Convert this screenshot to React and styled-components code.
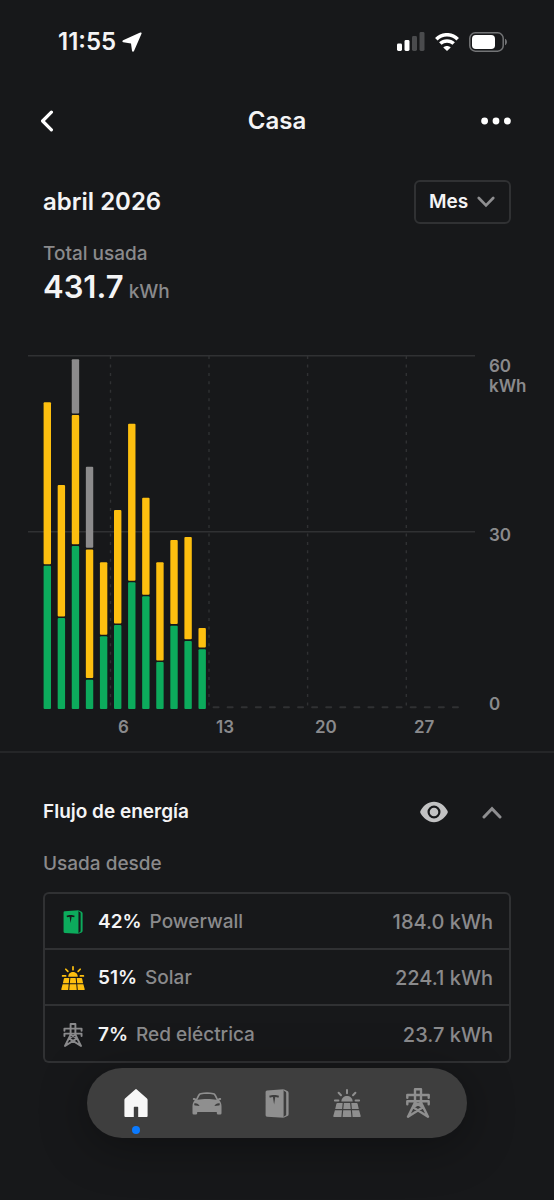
import { useState } from "react"
import styled, { createGlobalStyle } from "styled-components"

const days = [
  { powerwall: 24.4, solar: 27.9 },
  { powerwall: 15.5, solar: 22.7 },
  { powerwall: 27.8, solar: 22.3, grid: 9.5 },
  { powerwall: 5, solar: 22.2, grid: 14.1 },
  { powerwall: 12.4, solar: 12.6 },
  { powerwall: 14.3, solar: 19.6 },
  { powerwall: 21.6, solar: 27 },
  { powerwall: 19.2, solar: 16.8 },
  { powerwall: 8, solar: 17 },
  { powerwall: 14.2, solar: 14.6 },
  { powerwall: 11.6, solar: 17.7 },
  { powerwall: 10.2, solar: 3.6 },
]

const sources = [
  { name: "Powerwall", percent: "42%", total: "184.0 kWh", color: "#0cab5c", Icon: PowerwallIcon },
  { name: "Solar", percent: "51%", total: "224.1 kWh", color: "#fdbf0f", Icon: SolarIcon },
  { name: "Red eléctrica", percent: "7%", total: "23.7 kWh", color: "#8a8a8c", Icon: GridIcon },
]

const tabs = [
  { name: "Casa", Icon: HouseIcon },
  { name: "Vehículo", Icon: CarIcon },
  { name: "Powerwall", Icon: PowerwallIcon },
  { name: "Solar", Icon: SolarIcon },
  { name: "Red eléctrica", Icon: GridIcon },
]

export default function App() {
  const [open, setOpen] = useState(true)
  const [tab, setTab] = useState("Casa")

  return (
    <>
      <GlobalStyle />
      <StatusBar>
        <Clock>
          <span>11:55</span>
          <LocationIcon />
        </Clock>
        <StatusIcons>
          <SignalIcon />
          <WifiIcon />
          <BatteryIcon />
        </StatusIcons>
      </StatusBar>

      <Header>
        <IconButton aria-label="Atrás">
          <svg width="14" height="22" viewBox="0 0 14 22" fill="none" stroke="#fff" strokeWidth="3.2" strokeLinecap="round" strokeLinejoin="round">
            <path d="M11.4 2.2 2.6 11l8.8 8.8" />
          </svg>
        </IconButton>
        <h1>Casa</h1>
        <IconButton aria-label="Más opciones">
          <svg width="33" height="8" viewBox="0 0 33 8" fill="#fff">
            <circle cx="3.6" cy="4" r="3.4" />
            <circle cx="15" cy="4" r="3.4" />
            <circle cx="26.4" cy="4" r="3.4" />
          </svg>
        </IconButton>
      </Header>

      <main>
        <PeriodRow>
          <h2>abril 2026</h2>
          <PeriodPicker>
            <select aria-label="Periodo" defaultValue="Mes">
              <option>Día</option>
              <option>Mes</option>
              <option>Año</option>
            </select>
            <Chevron width={18} />
          </PeriodPicker>
        </PeriodRow>

        <Total>
          <Muted>Total usada</Muted>
          <p>
            <strong>431.7</strong> <Muted>kWh</Muted>
          </p>
        </Total>

        <ChartRow>
          <Chart />
          <Axis>
            <span>60 kWh</span>
            <span>30</span>
            <span>0</span>
          </Axis>
        </ChartRow>

        <Flow>
          <FlowHeader>
            <h3>Flujo de energía</h3>
            <IconButton aria-label="Mostrar en el gráfico">
              <EyeIcon />
            </IconButton>
            <IconButton aria-label="Contraer" aria-expanded={open} onClick={() => setOpen(!open)}>
              <Chevron width={20} up={open} />
            </IconButton>
          </FlowHeader>
          {open && (
            <Sources>
              <caption>Usada desde</caption>
              <tbody>
                {sources.map(({ name, percent, total, color, Icon }) => (
                  <tr key={name}>
                    <SourceName scope="row">
                      <div>
                        <SourceIcon color={color}>
                          <Icon />
                        </SourceIcon>
                        <strong>{percent}</strong>
                        <span>{name}</span>
                      </div>
                    </SourceName>
                    <SourceTotal>{total}</SourceTotal>
                  </tr>
                ))}
              </tbody>
            </Sources>
          )}
        </Flow>
      </main>

      <TabBar>
        {tabs.map(({ name, Icon }) => (
          <Tab key={name} aria-label={name} $active={tab === name} onClick={() => setTab(name)}>
            <Icon />
          </Tab>
        ))}
      </TabBar>
    </>
  )
}

const STEP = 14.08
const UNIT = 5.867
const BASE = 354

function Chart() {
  return (
    <svg viewBox="0 0 447 384" role="img" aria-label="Energía usada por día">
      <g stroke="#303133" strokeWidth="1.4">
        <path d="M0 .8H447M0 176.8H447" />
        {[82.5, 181, 279.6, 378.3].map((x) => (
          <path key={x} d={`M${x} 1V352`} strokeDasharray="3 5.45" />
        ))}
      </g>
      {Array.from({ length: 30 }, (_, i) => {
        const x = 15.6 + i * STEP
        if (!days[i]) return <rect key={i} x={x} y="351.2" width="7" height="2" rx="1" fill="#303133" />
        const { powerwall, solar, grid = 0 } = days[i]
        return (
          <g key={i}>
            <Segment x={x} from={0} value={powerwall} fill="#0cab5c" />
            <Segment x={x} from={powerwall} value={solar} fill="#fdbf0f" />
            {grid > 0 && <Segment x={x} from={powerwall + solar} value={grid} fill="#8c8b8c" />}
          </g>
        )
      })}
      <DayLabels>
        <text x="90" y="378">6</text>
        <text x="188" y="378">13</text>
        <text x="287" y="378">20</text>
        <text x="386" y="378">27</text>
      </DayLabels>
    </svg>
  )
}

function Segment({ x, from, value, fill }) {
  const gap = from ? 1.6 : 0
  const height = value * UNIT
  return <rect x={x} y={BASE - from * UNIT - height} width="7.4" height={height - gap} rx="1" fill={fill} />
}

function Chevron({ width, up }) {
  return (
    <svg width={width} height={width * 0.65} viewBox="0 0 20 13" fill="none" stroke="#8e8e90" strokeWidth="3" strokeLinecap="round">
      <path d={up ? "M2 11 10 2.6 18 11" : "M2 2.2 10 10.4 18 2.2"} />
    </svg>
  )
}

function LocationIcon() {
  return (
    <svg width="20" height="20" viewBox="0 0 20 20" fill="#fff">
      <path d="M18.2.5C19.2.1 19.9.8 19.5 1.8L12 19C11.6 20 10.2 19.9 10 18.8L9 11.4 1.3 10.2C.2 10 .1 8.6 1.1 8.2Z" />
    </svg>
  )
}

function SignalIcon() {
  return (
    <svg width="28" height="19" viewBox="0 0 28 19" fill="#fff">
      <rect x="0" y="11.5" width="5" height="7.5" rx="1.4" />
      <rect x="7.5" y="8" width="5" height="11" rx="1.4" />
      <rect x="15" y="4" width="5" height="15" rx="1.4" fill="#4a4b4d" />
      <rect x="22.5" y="0" width="5" height="19" rx="1.4" fill="#4a4b4d" />
    </svg>
  )
}

function WifiIcon() {
  return (
    <svg width="24" height="18" viewBox="0 0 24 18" fill="none" stroke="#fff" strokeWidth="3.5">
      <path d="M1.3 6.2C7.2.2 16.8.2 22.7 6.2" />
      <path d="M5.3 10.6C9 7 15 7 18.7 10.6" />
      <path d="M12 18 8.3 14.4C10.200 12.400 13.800 12.400 15.700 14.400Z" fill="#fff" stroke="none" />
    </svg>
  )
}

function BatteryIcon() {
  return (
    <svg width="39" height="20" viewBox="0 0 39 20">
      <rect x=".8" y=".8" width="33.4" height="18.4" rx="5.5" fill="none" stroke="#737476" strokeWidth="1.5" />
      <rect x="3" y="3" width="23" height="14" rx="3.8" fill="#fff" />
      <path d="M36 6.8C38.6 7.8 38.6 12.2 36 13.2Z" fill="#737476" />
    </svg>
  )
}

function EyeIcon() {
  return (
    <svg width="28" height="22" viewBox="0 0 28 22">
      <path d="M14 .8C20 .8 24.5 4.8 27.3 9.4Q28.3 11 27.3 12.6C24.5 17.2 20 21.2 14 21.2S3.5 17.2.7 12.6Q-.3 11 .7 9.4C3.5 4.8 8 .8 14 .8Z" fill="#c2c2c3" />
      <circle cx="14" cy="11" r="5.4" fill="none" stroke="#17181a" strokeWidth="2.2" />
    </svg>
  )
}

function HouseIcon() {
  return (
    <svg width="24" height="28" viewBox="0 0 24 28" fill="currentColor">
      <path d="M11.2.4Q12 -.2 12.8.4L23 9.6Q23.6 10.2 23.6 11V27Q23.6 28 22.6 28H14.2V18.4Q14.2 17.8 13.6 17.8H10.4Q9.8 17.8 9.8 18.4V28H1.4Q.4 28 .4 27V11Q.4 10.2 1 9.6Z" />
    </svg>
  )
}

function CarIcon() {
  return (
    <svg width="30" height="23" viewBox="0 0 30 23" fill="currentColor">
      <path
        fillRule="evenodd"
        d="M8.5.9C12.5.1 17.5.1 21.5.9C22.6 1.1 23.3 1.7 23.9 2.8L26 6.9C26.3 6.2 27.2 5.9 28.3 6.1C29.4 6.4 29.5 7.6 28.5 7.9L27.2 8.2C28.8 9.7 29.5 11.8 29.5 14.3V21.2Q29.5 22.4 28.3 22.4H26Q24.9 22.4 24.8 21.2V20H5.2V21.2Q5.1 22.4 4 22.4H1.7Q.5 22.4.5 21.2V14.3C.5 11.8 1.2 9.7 2.8 8.2L1.5 7.9C.5 7.6.6 6.4 1.7 6.1C2.8 5.9 3.7 6.2 4 6.9L6.1 2.8C6.7 1.7 7.4 1.1 8.5.9ZM7.7 3.4 5.4 7.8C11 6.7 19 6.7 24.6 7.8L22.3 3.4C22 2.8 21.6 2.5 21 2.4C17.2 1.8 12.8 1.8 9 2.4C8.4 2.5 8 2.8 7.7 3.4ZM2.4 11.2C2 12.6 2.3 13.4 3.5 13.6L7.6 14C6.8 12.2 4.9 10.8 2.4 11.2ZM27.6 11.2C25.1 10.8 23.2 12.2 22.4 14L26.5 13.6C27.7 13.4 28 12.6 27.6 11.2Z"
      />
    </svg>
  )
}

function PowerwallIcon() {
  return (
    <svg width="24" height="29" viewBox="0 0 24 29" fill="currentColor">
      <path
        fillRule="evenodd"
        d="M2 1.5 18.6.3V28.7L2 27.7Q.6 27.5.6 26.3V2.9Q.6 1.7 2 1.5ZM4.2 6.8C6.6 5.7 11.6 5.7 14 6.8L13.4 8.8C12.3 8.3 11.3 8.1 10.3 8.1L9.1 15.6 7.9 8.1C6.9 8.1 5.9 8.3 4.8 8.8Z"
      />
      <path d="M18.6.3 22.4 2Q23.6 2.600 23.600 4V25.200Q23.600 26.500 22.400 27.100L18.600 28.700V27.700L20.600 26.600Q21.200 26.200 21.200 25.400V3.900Q21.200 3.100 20.600 2.700L18.600 1.500Z" />
    </svg>
  )
}

function SolarIcon() {
  return (
    <svg width="28" height="28" viewBox="0 0 28 28" fill="currentColor">
      <g stroke="currentColor" strokeWidth="2" strokeLinecap="round">
        <path d="M14 1V4.3M5.6 3.8 8 6.3M22.4 3.8 20 6.3M1.9 11.6H5.4M22.6 11.6H26.1" />
      </g>
      <path d="M8.4 12.6C8.4 5.2 19.6 5.2 19.6 12.6Z" />
      <path d="M4.3 14H9.7L9.1 20H2.2L3.4 14.7Q3.6 14 4.3 14ZM10.9 14H17.1L17.7 20H10.3ZM18.3 14H23.7Q24.4 14 24.6 14.7L25.8 20H18.9Z" />
      <path d="M1.9 21.3H9L8.4 28H1Q.1 28 .3 27.1ZM10.2 21.3H17.8L18.4 28H9.6ZM19 21.3H26.1L27.7 27.1Q27.9 28 27 28H19.6Z" />
    </svg>
  )
}

function GridIcon() {
  return (
    <svg width="24" height="30" viewBox="0 0 24 30" fill="none" stroke="currentColor" strokeWidth="2.4" strokeLinecap="round" strokeLinejoin="round">
      <path d="M9 14.5V1.3H15V14.5" />
      <path d="M1.3 9.8V7H22.7V9.8M1.3 16.2V13.3H22.7V16.2" />
      <path d="M9 14.5 2 28.7 17 19.2M15 14.5 22 28.7 7 19.2M9.5 15 16.7 19M14.5 15 7.3 19" />
    </svg>
  )
}

const GlobalStyle = createGlobalStyle`
  * {
    box-sizing: border-box;
    margin: 0;
  }
  body {
    background: #17181a;
    color: #f4f4f5;
    font-family: Inter, "Liberation Sans", sans-serif;
    font-size: 19px;
    line-height: 24px;
    font-weight: 500;
  }
  button, select {
    border: 0;
    padding: 0;
    background: none;
    color: inherit;
    font: inherit;
    cursor: pointer;
  }
  svg {
    display: block;
    flex-shrink: 0;
  }
`
const StatusBar = styled.div`
  display: flex;
  align-items: center;
  justify-content: space-between;
  height: 83px;
  padding: 0 46px 0 58px;
`
const Clock = styled.div`
  display: flex;
  align-items: center;
  gap: 6px;
  font-size: 24px;
  font-weight: 600;
`
const StatusIcons = styled.div`
  display: flex;
  align-items: center;
  gap: 10px;
`
const Header = styled.header`
  display: grid;
  grid-template-columns: 1fr auto 1fr;
  align-items: center;
  height: 76px;
  padding: 0 40px;
  h1 {
    font-size: 24px;
    font-weight: 600;
  }
  button:last-child {
    justify-self: end;
  }
`
const IconButton = styled.button`
  display: flex;
  align-items: center;
  height: 32px;
`
const PeriodRow = styled.section`
  display: flex;
  align-items: center;
  justify-content: space-between;
  padding: 21px 43px 0;
  h2 {
    font-size: 24px;
    font-weight: 600;
    line-height: 26px;
  }
`
const PeriodPicker = styled.div`
  display: flex;
  align-items: center;
  gap: 8px;
  height: 44px;
  padding: 0 14px 0 13px;
  border: 2px solid #303133;
  border-radius: 6px;
  select {
    width: 40px;
    appearance: none;
    outline: none;
    font-weight: 600;
  }
`
const Muted = styled.span`
  color: #8a8a8c;
`
const Total = styled.section`
  padding: 18px 43px 0;
  p {
    line-height: 42px;
  }
  strong {
    font-size: 31px;
    font-weight: 600;
  }
`
const ChartRow = styled.section`
  display: flex;
  align-items: flex-start;
  padding: 42px 0 12px 28px;
  border-bottom: 2px solid #252628;
  > svg {
    flex: 1;
    min-width: 0;
  }
`
const Axis = styled.div`
  display: flex;
  flex-direction: column;
  justify-content: space-between;
  width: 79px;
  height: 359px;
  padding: 1px 0 0 14px;
  color: #8a8a8c;
  font-size: 17px;
  font-weight: 600;
  line-height: 20px;
  span {
    width: 40px;
    height: 20px;
  }
`
const DayLabels = styled.g`
  fill: #8a8a8c;
  font-size: 17px;
  font-weight: 600;
`
const Flow = styled.section`
  padding: 43px 43px 137px;
`
const FlowHeader = styled.div`
  display: flex;
  align-items: center;
  gap: 34px;
  padding-right: 9px;
  h3 {
    flex: 1;
    font-size: 19px;
    font-weight: 600;
  }
`
const Sources = styled.table`
  width: 100%;
  border-collapse: separate;
  border-spacing: 0;
  caption {
    padding: 24px 0 16px;
    color: #8a8a8c;
    text-align: left;
  }
  tr > * {
    height: 56px;
    padding: 2px 16px 0;
    border: 0 solid #303133;
    border-top-width: 2px;
  }
  tr > :first-child {
    border-left-width: 2px;
  }
  tr > :last-child {
    border-right-width: 2px;
  }
  tr:last-child > * {
    height: 59px;
    border-bottom-width: 2px;
  }
  tr:first-child > :first-child {
    border-top-left-radius: 6px;
  }
  tr:first-child > :last-child {
    border-top-right-radius: 6px;
  }
  tr:last-child > :first-child {
    border-bottom-left-radius: 6px;
  }
  tr:last-child > :last-child {
    border-bottom-right-radius: 6px;
  }
`
const SourceName = styled.th`
  text-align: left;
  font-weight: 500;
  div {
    display: flex;
    align-items: center;
    gap: 8px;
  }
  strong {
    font-weight: 600;
  }
  span {
    color: #8a8a8c;
  }
`
const SourceIcon = styled.i`
  display: flex;
  justify-content: center;
  width: 24px;
  margin-right: 5px;
  color: ${(props) => props.color};
  svg {
    height: 24px;
  }
`
const SourceTotal = styled.td`
  color: #8a8a8c;
  font-size: 20px;
  text-align: right;
`
const TabBar = styled.nav`
  position: fixed;
  inset: auto 87px 62px;
  display: flex;
  height: 70px;
  padding: 0 14px;
  border-radius: 35px;
  background: #3e3e3e;
  box-shadow: 0 8px 48px rgba(0, 0, 0, 0.35);
`
const Tab = styled.button`
  position: relative;
  flex: 1;
  display: flex;
  align-items: center;
  justify-content: center;
  color: ${(props) => (props.$active ? "#f7f7f7" : "#8f8f8f")};
  &::after {
    content: "";
    display: ${(props) => (props.$active ? "block" : "none")};
    position: absolute;
    bottom: 4px;
    width: 8px;
    height: 8px;
    border-radius: 50%;
    background: #0a7aff;
  }
`
